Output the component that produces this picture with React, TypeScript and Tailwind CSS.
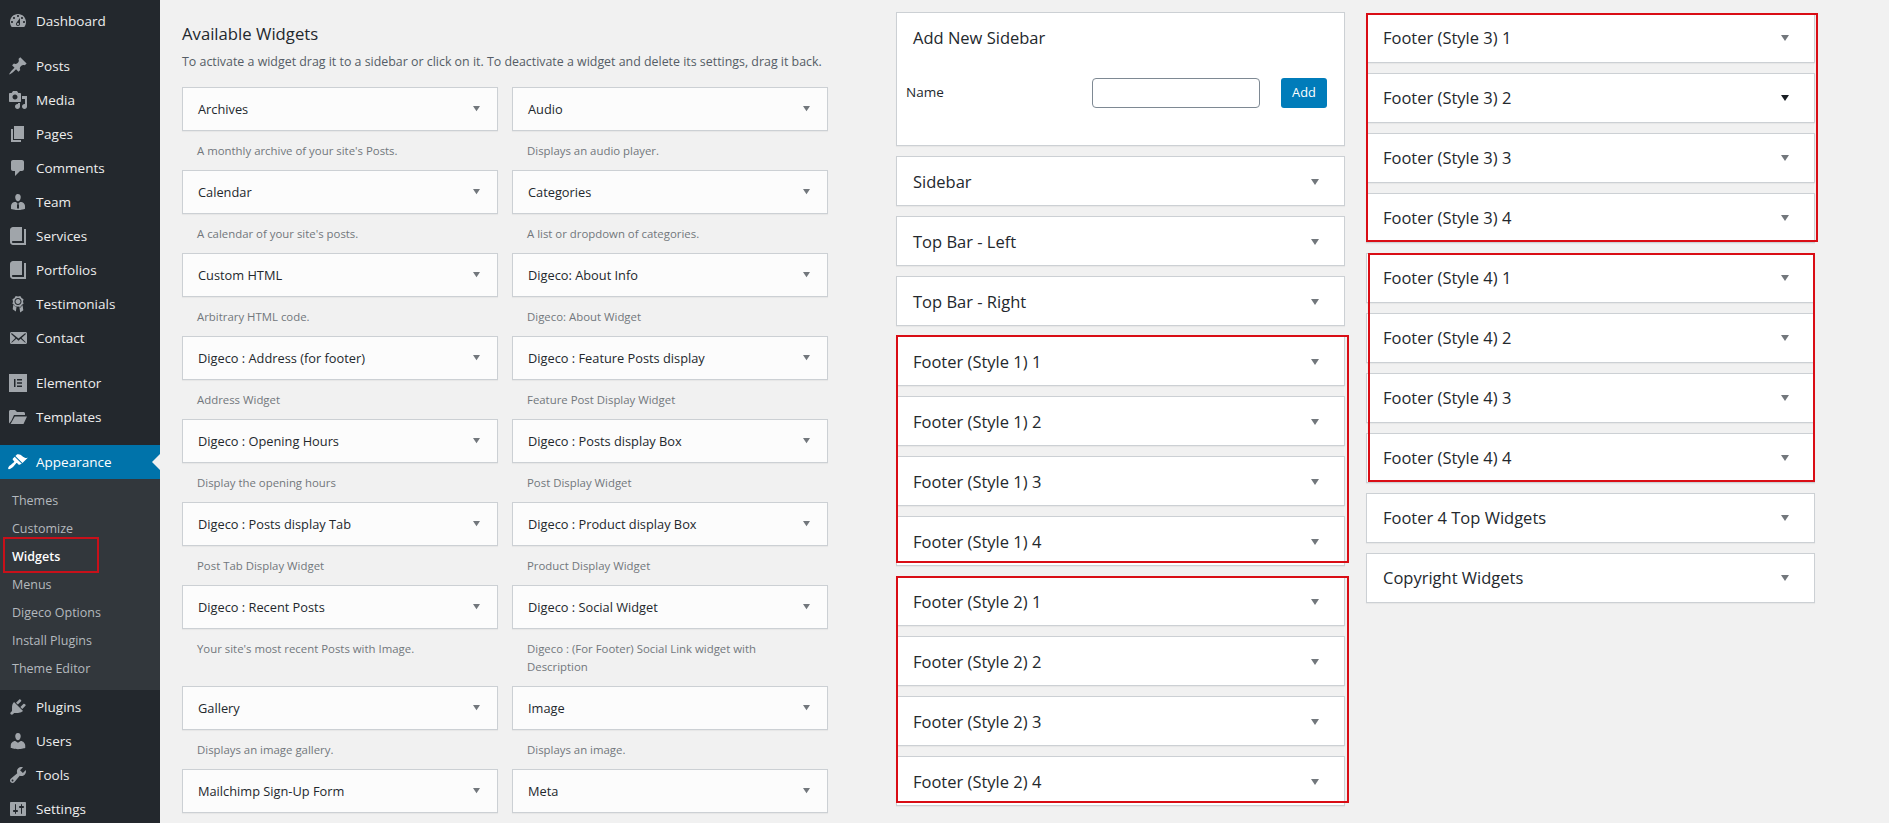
const icons = {
  dashboard:
    'M3.76 16h12.48c1.1-1.37 1.76-3.11 1.76-5 0-4.42-3.58-8-8-8s-8 3.58-8 8c0 1.89.66 3.63 1.76 5zM10 4c.55 0 1 .45 1 1s-.45 1-1 1-1-.45-1-1 .45-1 1-1zM6 6c.55 0 1 .45 1 1s-.45 1-1 1-1-.45-1-1 .45-1 1-1zm8 0c.55 0 1 .45 1 1s-.45 1-1 1-1-.45-1-1 .45-1 1-1zm-5.37 5.55L12 7v6c0 1.1-.9 2-2 2s-2-.9-2-2c0-.57.24-1.08.63-1.45zM4 10c.55 0 1 .45 1 1s-.45 1-1 1-1-.45-1-1 .45-1 1-1zm12 0c.55 0 1 .45 1 1s-.45 1-1 1-1-.45-1-1 .45-1 1-1zm-5 3c0-.55-.45-1-1-1s-1 .45-1 1 .45 1 1 1 1-.45 1-1z',
  post: 'M10.44 3.02l1.82-1.82 6.36 6.35-1.83 1.82c-1.05-.68-2.48-.57-3.41.36l-.75.75c-.92.93-1.04 2.35-.35 3.41l-1.83 1.82-2.41-2.41-2.8 2.79c-.42.42-3.38 2.71-3.8 2.29s1.86-3.39 2.28-3.81l2.79-2.79L4.1 9.36l1.83-1.82c1.05.69 2.48.57 3.4-.36l.75-.75c.93-.92 1.05-2.35.36-3.41z',
  media:
    'M13 11V4c0-.55-.45-1-1-1h-1.67L9 1H5L3.67 3H2c-.55 0-1 .45-1 1v7c0 .55.45 1 1 1h10c.55 0 1-.45 1-1zM7 4.5c1.38 0 2.5 1.12 2.5 2.5S8.38 9.5 7 9.5 4.5 8.38 4.5 7 5.62 4.5 7 4.5zM14 6h5v10.5c0 1.38-1.12 2.5-2.5 2.5S14 17.88 14 16.5s1.12-2.5 2.5-2.5c.17 0 .34.02.5.05V9h-3V6zm-4 8.05V13h2v3.5c0 1.38-1.12 2.5-2.5 2.5S7 17.88 7 16.5 8.12 14 9.5 14c.17 0 .34.02.5.05z',
  page: 'M6 15V2h10v13H6zm-1 1h8v2H3V5h2v11z',
  comments: 'M5 2h9c1.1 0 2 .9 2 2v7c0 1.1-.9 2-2 2h-2l-5 5v-5H5c-1.1 0-2-.9-2-2V4c0-1.1.9-2 2-2z',
  team: 'M7.3 6l-.03-.19c-.04-.37-.05-.73-.03-1.08.02-.36.1-.71.25-1.04.14-.32.31-.61.52-.86s.49-.46.83-.6c.34-.15.72-.23 1.13-.23.69 0 1.26.2 1.71.59s.76.87.91 1.44.18 1.16.09 1.78l-.03.19c-.01.09-.05.25-.11.48-.05.24-.12.47-.2.69-.08.21-.19.45-.34.72-.14.27-.3.49-.47.69-.18.19-.4.34-.67.48-.27.13-.55.19-.86.19s-.59-.06-.87-.19c-.26-.13-.49-.29-.67-.5-.18-.2-.34-.42-.49-.66-.15-.25-.26-.49-.34-.73-.09-.25-.16-.47-.21-.67-.06-.21-.1-.37-.12-.5zm9.2 6.24c.41.7.5 1.41.5 2.14v2.49c0 .03-.12.08-.29.13-.18.04-.42.13-.97.27-.55.12-1.1.24-1.65.34s-1.19.19-1.95.27c-.75.08-1.46.12-2.13.12-.68 0-1.39-.04-2.14-.12-.75-.07-1.4-.17-1.98-.27-.58-.11-1.08-.23-1.56-.34-.49-.11-.8-.21-1.06-.29L3 16.87v-2.49c0-.75.07-1.46.46-2.15s.81-1.25 1.5-1.68C5.66 10.12 7.19 10 8 10l1.67 1.67L9 13v3l1.02 1.08L11 16v-3l-.68-1.33L11.97 10c.77 0 2.2.07 2.9.52.71.45 1.21 1.02 1.63 1.72z',
  book: 'M16 3h2v16H5c-1.66 0-3-1.34-3-3V4c0-1.66 1.34-3 3-3h9v14H5c-.55 0-1 .45-1 1s.45 1 1 1h11V3z',
  awards:
    'M4.46 5.16L5 7.46l-.54 2.29 2.01 1.24L7.7 13l2.3-.54 2.3.54 1.23-2.01 2.01-1.24L15 7.46l.54-2.3-2-1.24-1.24-2.01-2.3.55-2.29-.54-1.25 2zM10 11c-1.93 0-3.5-1.57-3.5-3.5S8.07 4 10 4s3.5 1.57 3.5 3.5S11.93 11 10 11zm0-1c1.38 0 2.5-1.12 2.5-2.5S11.38 5 10 5 7.500 6.120 7.500 7.500 8.620 10 10 10zM5.970 10.740l1.070 1.750 1.540-.36-.72 5.260-3.160-2.060.54-3.990zm8.060 0l.73 1.600.54 3.990-3.150 2.060-.72-5.260 1.530.36z',
  email:
    'M19 14.5v-9c0-.83-.67-1.5-1.5-1.5H3.49c-.83 0-1.5.67-1.5 1.5v9c0 .83.67 1.5 1.5 1.5H17.5c.83 0 1.5-.67 1.5-1.5zm-1.31-9.11c.33.33.15.67-.03.84L13.6 9.95l3.9 4.06c.12.14.2.36.06.51-.13.16-.43.15-.56.05l-4.37-3.73-2.14 1.95-2.13-1.95-4.37 3.73c-.13.1-.43.11-.56-.05-.14-.15-.06-.37.06-.51l3.9-4.06-4.06-3.72c-.18-.17-.36-.51-.03-.84s.67-.17.95.07l6.24 5.04 6.25-5.04c.28-.24.62-.4.95-.07z',
  elementor: 'M1 1h18v18H1zM6 6v8h1.5V6zM9 6v1.5h5V6zM9 9.25v1.5h5v-1.5zM9 12.5V14h5v-1.5z',
  folder: 'M1 16.5V4.5C1 3.7 1.7 3 2.500 3H7l2 2h6.500c.8 0 1.500.7 1.500 1.500V8H6L3.200 14 1 16.500zM6.800 9.500H19l-3.500 7.500H2.600z',
  appearance:
    'M14.48 11.06L7.41 3.99l1.5-1.5c.5-.56 2.3-.47 3.51.32 1.21.8 1.43 1.28 2.91 2.1 1.18.64 2.45 1.26 4.45.85zm-.71.71L6.7 4.7 4.93 6.47c-.39.39-.39 1.02 0 1.41l1.06 1.06c.39.39.39 1.03 0 1.42-.6.6-1.43 1.11-2.21 1.69-.35.26-.7.53-1.01.84C1.43 13.23.13 15.22.13 16.42c0 .45.36.82.83.82 1.17 0 3.18-1.29 4.52-2.62.31-.31.58-.66.84-1.01.58-.78 1.09-1.61 1.69-2.21.39-.39 1.03-.39 1.42 0l1.06 1.06c.39.39 1.02.39 1.41 0z',
  plugins:
    'M13.11 4.36L9.87 7.6 8 5.73l3.24-3.24c.35-.34 1.05-.2 1.56.32.52.51.66 1.21.31 1.55zm-8 1.77l.91-1.12 9.01 9.01-1.19.84c-.71.71-2.63 1.16-3.82 1.16H6.14L4.9 17.26c-.59.59-1.54.59-2.12 0-.59-.58-.59-1.53 0-2.12l1.24-1.24v-3.88c0-1.13.4-3.19 1.09-3.89zm7.26 3.97l3.24-3.24c.34-.35 1.04-.21 1.55.31.52.51.66 1.21.31 1.55l-3.24 3.25z',
  users:
    'M10 9.25c-2.27 0-2.73-3.44-2.73-3.44C7 4.02 7.82 2 9.97 2c2.16 0 2.98 2.02 2.71 3.81 0 0-.41 3.44-2.68 3.44zm0 2.57L12.72 10c2.39 0 4.52 2.33 4.52 4.53v2.49s-3.65 1.13-7.24 1.13c-3.65 0-7.24-1.13-7.24-1.13v-2.49c0-2.25 1.94-4.48 4.47-4.48z',
  tools:
    'M16.68 9.77c-1.34 1.34-3.3 1.67-4.95.99l-5.41 6.52c-.99.99-2.59.99-3.58 0s-.99-2.59 0-3.57l6.52-5.42c-.68-1.65-.35-3.61.99-4.95 1.28-1.28 3.12-1.62 4.72-1.06l-2.89 2.89 2.82 2.82 2.86-2.87c.53 1.58.18 3.39-1.08 4.65zM3.81 16.21c.4.39 1.04.39 1.43 0 .4-.4.4-1.04 0-1.43-.39-.4-1.03-.4-1.43 0-.39.39-.39 1.03 0 1.43z',
  settings:
    'M18 16V4c0-.55-.45-1-1-1H3c-.55 0-1 .45-1 1v12c0 .55.45 1 1 1h14c.55 0 1-.45 1-1zM8 11h1c.55 0 1 .45 1 1s-.45 1-1 1H8v1.5c0 .28-.22.5-.5.5s-.5-.22-.5-.5V13H6c-.55 0-1-.45-1-1s.45-1 1-1h1V5.5c0-.28.22-.5.5-.5s.5.22.5.5V11zm5-2h-1c-.55 0-1-.45-1-1s.45-1 1-1h1V5.5c0-.28.22-.5.5-.5s.5.22.5.5V7h1c.55 0 1 .45 1 1s-.45 1-1 1h-1v5.5c0 .28-.22.5-.5.5s-.5-.22-.5-.5V9z',
};

type IconName = keyof typeof icons;

const menuTop: [string, IconName][] = [
  ['Posts', 'post'],
  ['Media', 'media'],
  ['Pages', 'page'],
  ['Comments', 'comments'],
  ['Team', 'team'],
  ['Services', 'book'],
  ['Portfolios', 'book'],
  ['Testimonials', 'awards'],
  ['Contact', 'email'],
];

const subMenu = ['Themes', 'Customize', 'Widgets', 'Menus', 'Digeco Options', 'Install Plugins', 'Theme Editor'];

const widgets = [
  ['Archives', "A monthly archive of your site's Posts."],
  ['Audio', 'Displays an audio player.'],
  ['Calendar', "A calendar of your site's posts."],
  ['Categories', 'A list or dropdown of categories.'],
  ['Custom HTML', 'Arbitrary HTML code.'],
  ['Digeco: About Info', 'Digeco: About Widget'],
  ['Digeco : Address (for footer)', 'Address Widget'],
  ['Digeco : Feature Posts display', 'Feature Post Display Widget'],
  ['Digeco : Opening Hours', 'Display the opening hours'],
  ['Digeco : Posts display Box', 'Post Display Widget'],
  ['Digeco : Posts display Tab', 'Post Tab Display Widget'],
  ['Digeco : Product display Box', 'Product Display Widget'],
  ['Digeco : Recent Posts', "Your site's most recent Posts with Image."],
  ['Digeco : Social Widget', 'Digeco : (For Footer) Social Link widget with Description'],
  ['Gallery', 'Displays an image gallery.'],
  ['Image', 'Displays an image.'],
  ['Mailchimp Sign-Up Form', ''],
  ['Meta', ''],
];

function MenuIcon({ name, className }: { name: IconName; className?: string }) {
  return (
    <svg viewBox="0 0 20 20" className={className ?? 'h-5 w-5 fill-[#a0a5aa]'} fillRule="evenodd">
      <path d={icons[name]} />
    </svg>
  );
}

function MenuItem({ label, icon }: { label: string; icon: IconName }) {
  return (
    <div className="flex h-[34px] items-center">
      <div className="flex w-9 justify-center">
        <MenuIcon name={icon} />
      </div>
      <span className="text-[13.5px] text-[#eeeeee]">{label}</span>
    </div>
  );
}

function Arrow({ className }: { className: string }) {
  return (
    <svg viewBox="0 0 8 6" className={className}>
      <polygon points="0,0 8,0 4,6" />
    </svg>
  );
}

function SidebarCard({ title, dark, low }: { title: string; dark?: boolean; low?: boolean }) {
  return (
    <div
      className={
        low
          ? 'flex h-[50px] items-center justify-between border border-[#ccd0d4] bg-white pt-0.5 pr-[25px] pl-4 shadow-[0_1px_1px_rgba(0,0,0,0.04)]'
          : 'flex h-[50px] items-center justify-between border border-[#ccd0d4] bg-white pr-[25px] pl-4 shadow-[0_1px_1px_rgba(0,0,0,0.04)]'
      }
    >
      <span className="text-[16.5px] text-[#23282d]">{title}</span>
      <Arrow className={dark ? 'h-1.5 w-2 fill-[#191e23]' : 'h-1.5 w-2 fill-[#72777c]'} />
    </div>
  );
}

function RedGroup({ titles, frame, low }: { titles: string[]; frame: string; low?: boolean }) {
  return (
    <div className="relative flex flex-col gap-2.5">
      {titles.map((title) => (
        <SidebarCard key={title} title={title} low={low} dark={title === 'Footer (Style 3) 2'} />
      ))}
      <div className={frame} />
    </div>
  );
}

const styleTitles = (n: number) => [1, 2, 3, 4].map((i) => `Footer (Style ${n}) ${i}`);

export default function App() {
  return (
    <div className="flex h-[823px] overflow-hidden bg-[#f1f1f1] font-['Open_Sans',sans-serif]">
      <aside className="w-40 shrink-0 bg-[#23282d] pt-1">
        <MenuItem label="Dashboard" icon="dashboard" />
        <div className="h-[11px]" />
        {menuTop.map(([label, icon]) => (
          <MenuItem key={label} label={label} icon={icon} />
        ))}
        <div className="h-[11px]" />
        <MenuItem label="Elementor" icon="elementor" />
        <MenuItem label="Templates" icon="folder" />
        <div className="h-[11px]" />
        <div className="relative flex h-[34px] items-center bg-[#0073aa]">
          <div className="flex w-9 justify-center">
            <MenuIcon name="appearance" className="h-5 w-5 fill-white" />
          </div>
          <span className="text-[13.5px] text-white">Appearance</span>
          <div className="absolute top-[9px] right-0 h-0 w-0 border-y-8 border-r-8 border-y-transparent border-r-[#f1f1f1]" />
        </div>
        <div className="bg-[#32373c] pt-2 pb-[7px]">
          {subMenu.map((item) => (
            <div
              key={item}
              className={
                item === 'Widgets'
                  ? 'relative flex h-7 items-center pl-3 text-[12.5px] font-semibold text-white'
                  : 'flex h-7 items-center pl-3 text-[12.5px] text-[#b4b9be]'
              }
            >
              {item}
              {item === 'Widgets' && (
                <div className="absolute -top-[6px] left-[3px] h-9 w-24 border-2 border-[#c8101a]" />
              )}
            </div>
          ))}
        </div>
        <MenuItem label="Plugins" icon="plugins" />
        <MenuItem label="Users" icon="users" />
        <MenuItem label="Tools" icon="tools" />
        <MenuItem label="Settings" icon="settings" />
      </aside>

      <main className="flex pl-[22px]">
        <section className="w-[646px] shrink-0">
          <h2 className="mt-[23px] h-[22px] text-[16.7px] leading-[22px] font-medium text-[#23282d]">
            Available Widgets
          </h2>
          <p className="mt-2 h-[34px] text-[12.4px] leading-[18px] text-[#555d66]">
            To activate a widget drag it to a sidebar or click on it. To deactivate a widget and delete its settings,
            drag it back.
          </p>
          <div className="grid grid-cols-[316px_316px] gap-x-3.5">
            {widgets.map(([title, desc]) => (
              <div key={title}>
                <div className="flex h-[44px] items-center justify-between border border-[#ccd0d4] bg-[#fcfcfc] pr-[17px] pl-[15px] shadow-[0_1px_1px_rgba(0,0,0,0.04)]">
                  <span className="pt-px text-[12.8px] font-medium text-[#23282d]">{title}</span>
                  <Arrow className="mb-0.5 h-[7px] w-[7px] fill-[#72777c]" />
                </div>
                <p className="pt-[11px] pr-4 pb-2.5 pl-[15px] text-[11.4px] leading-[18px] text-[#72777c]">{desc}</p>
              </div>
            ))}
          </div>
        </section>

        <section className="ml-[68px] flex w-[449px] shrink-0 flex-col gap-2.5 pt-3">
          <div className="h-[134px] border border-[#ccd0d4] bg-white shadow-[0_1px_1px_rgba(0,0,0,0.04)]">
            <h3 className="mt-[13px] pl-4 text-[16.5px] leading-[24px] font-medium text-[#23282d]">Add New Sidebar</h3>
            <div className="mt-7 flex items-center pl-[9px]">
              <span className="w-[186px] pb-0.5 text-[13.5px] font-medium text-[#23282d]">Name</span>
              <input className="h-[30px] w-[168px] rounded border border-[#7e8993] bg-white" />
              <button className="ml-[21px] h-[30px] w-[46px] rounded-[3px] bg-[#007cba] text-[12.8px] text-white">
                Add
              </button>
            </div>
          </div>
          <SidebarCard low title="Sidebar" />
          <SidebarCard low title="Top Bar - Left" />
          <SidebarCard low title="Top Bar - Right" />
          <RedGroup
            low
            titles={styleTitles(1)}
            frame="absolute -top-px -right-1 bottom-[3px] left-0 border-2 border-[#d90d15]"
          />
          <RedGroup
            low
            titles={styleTitles(2)}
            frame="absolute top-0 -right-1 bottom-[3px] left-0 border-2 border-[#d90d15]"
          />
        </section>

        <section className="ml-[21px] flex w-[449px] shrink-0 flex-col gap-2.5 pt-[13px]">
          <RedGroup
            titles={styleTitles(3)}
            frame="absolute top-0 -right-[3px] bottom-px left-0 border-2 border-[#d90d15]"
          />
          <RedGroup titles={styleTitles(4)} frame="absolute top-0 right-0 bottom-px left-0.5 border-2 border-[#d90d15]" />
          <SidebarCard title="Footer 4 Top Widgets" />
          <SidebarCard title="Copyright Widgets" />
        </section>
      </main>
    </div>
  );
}
